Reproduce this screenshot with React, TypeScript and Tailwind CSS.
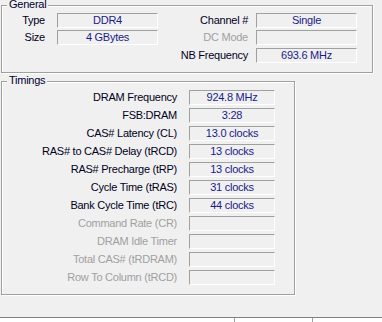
const FONT = "font-['Liberation_Sans',Arial,sans-serif]";

function Field({ value, w }: { value?: string; w: string }) {
  return (
    <div
      className={`${w} h-[15px] border-t border-l border-t-[#a0a0a0] border-l-[#a0a0a0] border-r border-b border-r-white border-b-white text-center leading-[13px] text-[#1a1a8a] whitespace-nowrap`}
    >
      {value}
    </div>
  );
}

function Row({
  label,
  value,
  labelW,
  fieldW,
  gap,
  disabled,
}: {
  label: string;
  value?: string;
  labelW: string;
  fieldW: string;
  gap: string;
  disabled?: boolean;
}) {
  return (
    <div className={`flex items-center h-[15px] ${gap}`}>
      <div
        className={`${labelW} text-right leading-[13px] whitespace-nowrap ${
          disabled ? "text-[#a0a0a0]" : "text-[#00001a]"
        }`}
      >
        {label}
      </div>
      <Field value={value} w={fieldW} />
    </div>
  );
}

function GroupLabel({ text }: { text: string }) {
  return (
    <div className="absolute left-[5px] top-[-8px] px-[2px] bg-[#f0f0f0] leading-[13px] text-[#000030]">
      {text}
    </div>
  );
}

const timings: [string, string | undefined, boolean?][] = [
  ["DRAM Frequency", "924.8 MHz"],
  ["FSB:DRAM", "3:28"],
  ["CAS# Latency (CL)", "13.0 clocks"],
  ["RAS# to CAS# Delay (tRCD)", "13 clocks"],
  ["RAS# Precharge (tRP)", "13 clocks"],
  ["Cycle Time (tRAS)", "31 clocks"],
  ["Bank Cycle Time (tRC)", "44 clocks"],
  ["Command Rate (CR)", undefined, true],
  ["DRAM Idle Timer", undefined, true],
  ["Total CAS# (tRDRAM)", undefined, true],
  ["Row To Column (tRCD)", undefined, true],
];

export default function App() {
  return (
    <div
      className={`${FONT} text-[11px] tracking-[-0.25px] w-[382px] h-[322px] bg-[#f0f0f0] flex flex-col overflow-hidden`}
    >
      {/* General */}
      <div className="relative mt-[5px] ml-[1px] w-[372px] h-[68px] border border-[#a0a0a0] shadow-[inset_1px_1px_0_#fff,1px_1px_0_#fff] flex pt-[7px]">
        <GroupLabel text="General" />
        <div className="flex flex-col gap-[2px] pl-[1px]">
          <Row label="Type" value="DDR4" labelW="w-[42px]" fieldW="w-[101px]" gap="gap-[12px]" />
          <Row label="Size" value="4 GBytes" labelW="w-[42px]" fieldW="w-[101px]" gap="gap-[12px]" />
        </div>
        <div className="flex flex-col">
          <Row label="Channel #" value="Single" labelW="w-[90px]" fieldW="w-[101px]" gap="gap-[8px]" />
          <div className="mt-[2px]">
            <Row label="DC Mode" labelW="w-[90px]" fieldW="w-[101px]" gap="gap-[8px]" disabled />
          </div>
          <div className="mt-[3px]">
            <Row label="NB Frequency" value="693.6 MHz" labelW="w-[90px]" fieldW="w-[101px]" gap="gap-[8px]" />
          </div>
        </div>
      </div>

      {/* Timings */}
      <div className="relative mt-[8px] ml-[1px] w-[294px] h-[214px] border border-[#a0a0a0] shadow-[inset_1px_1px_0_#fff,1px_1px_0_#fff] flex flex-col gap-[3px] pt-[8px] pl-[1px]">
        <GroupLabel text="Timings" />
        {timings.map(([l, v, d]) => (
          <Row key={l} label={l} value={v} labelW="w-[174px]" fieldW="w-[86px]" gap="gap-[12px]" disabled={d} />
        ))}
      </div>

      {/* bottom strip */}
      <div className="mt-auto relative h-[5px] border-t border-[#808080] bg-white">
        <div className="absolute left-[234px] top-0 w-px h-[4px] bg-[#a0a0a0]" />
        <div className="absolute left-[312px] top-0 w-px h-[4px] bg-[#a0a0a0]" />
      </div>
    </div>
  );
}
